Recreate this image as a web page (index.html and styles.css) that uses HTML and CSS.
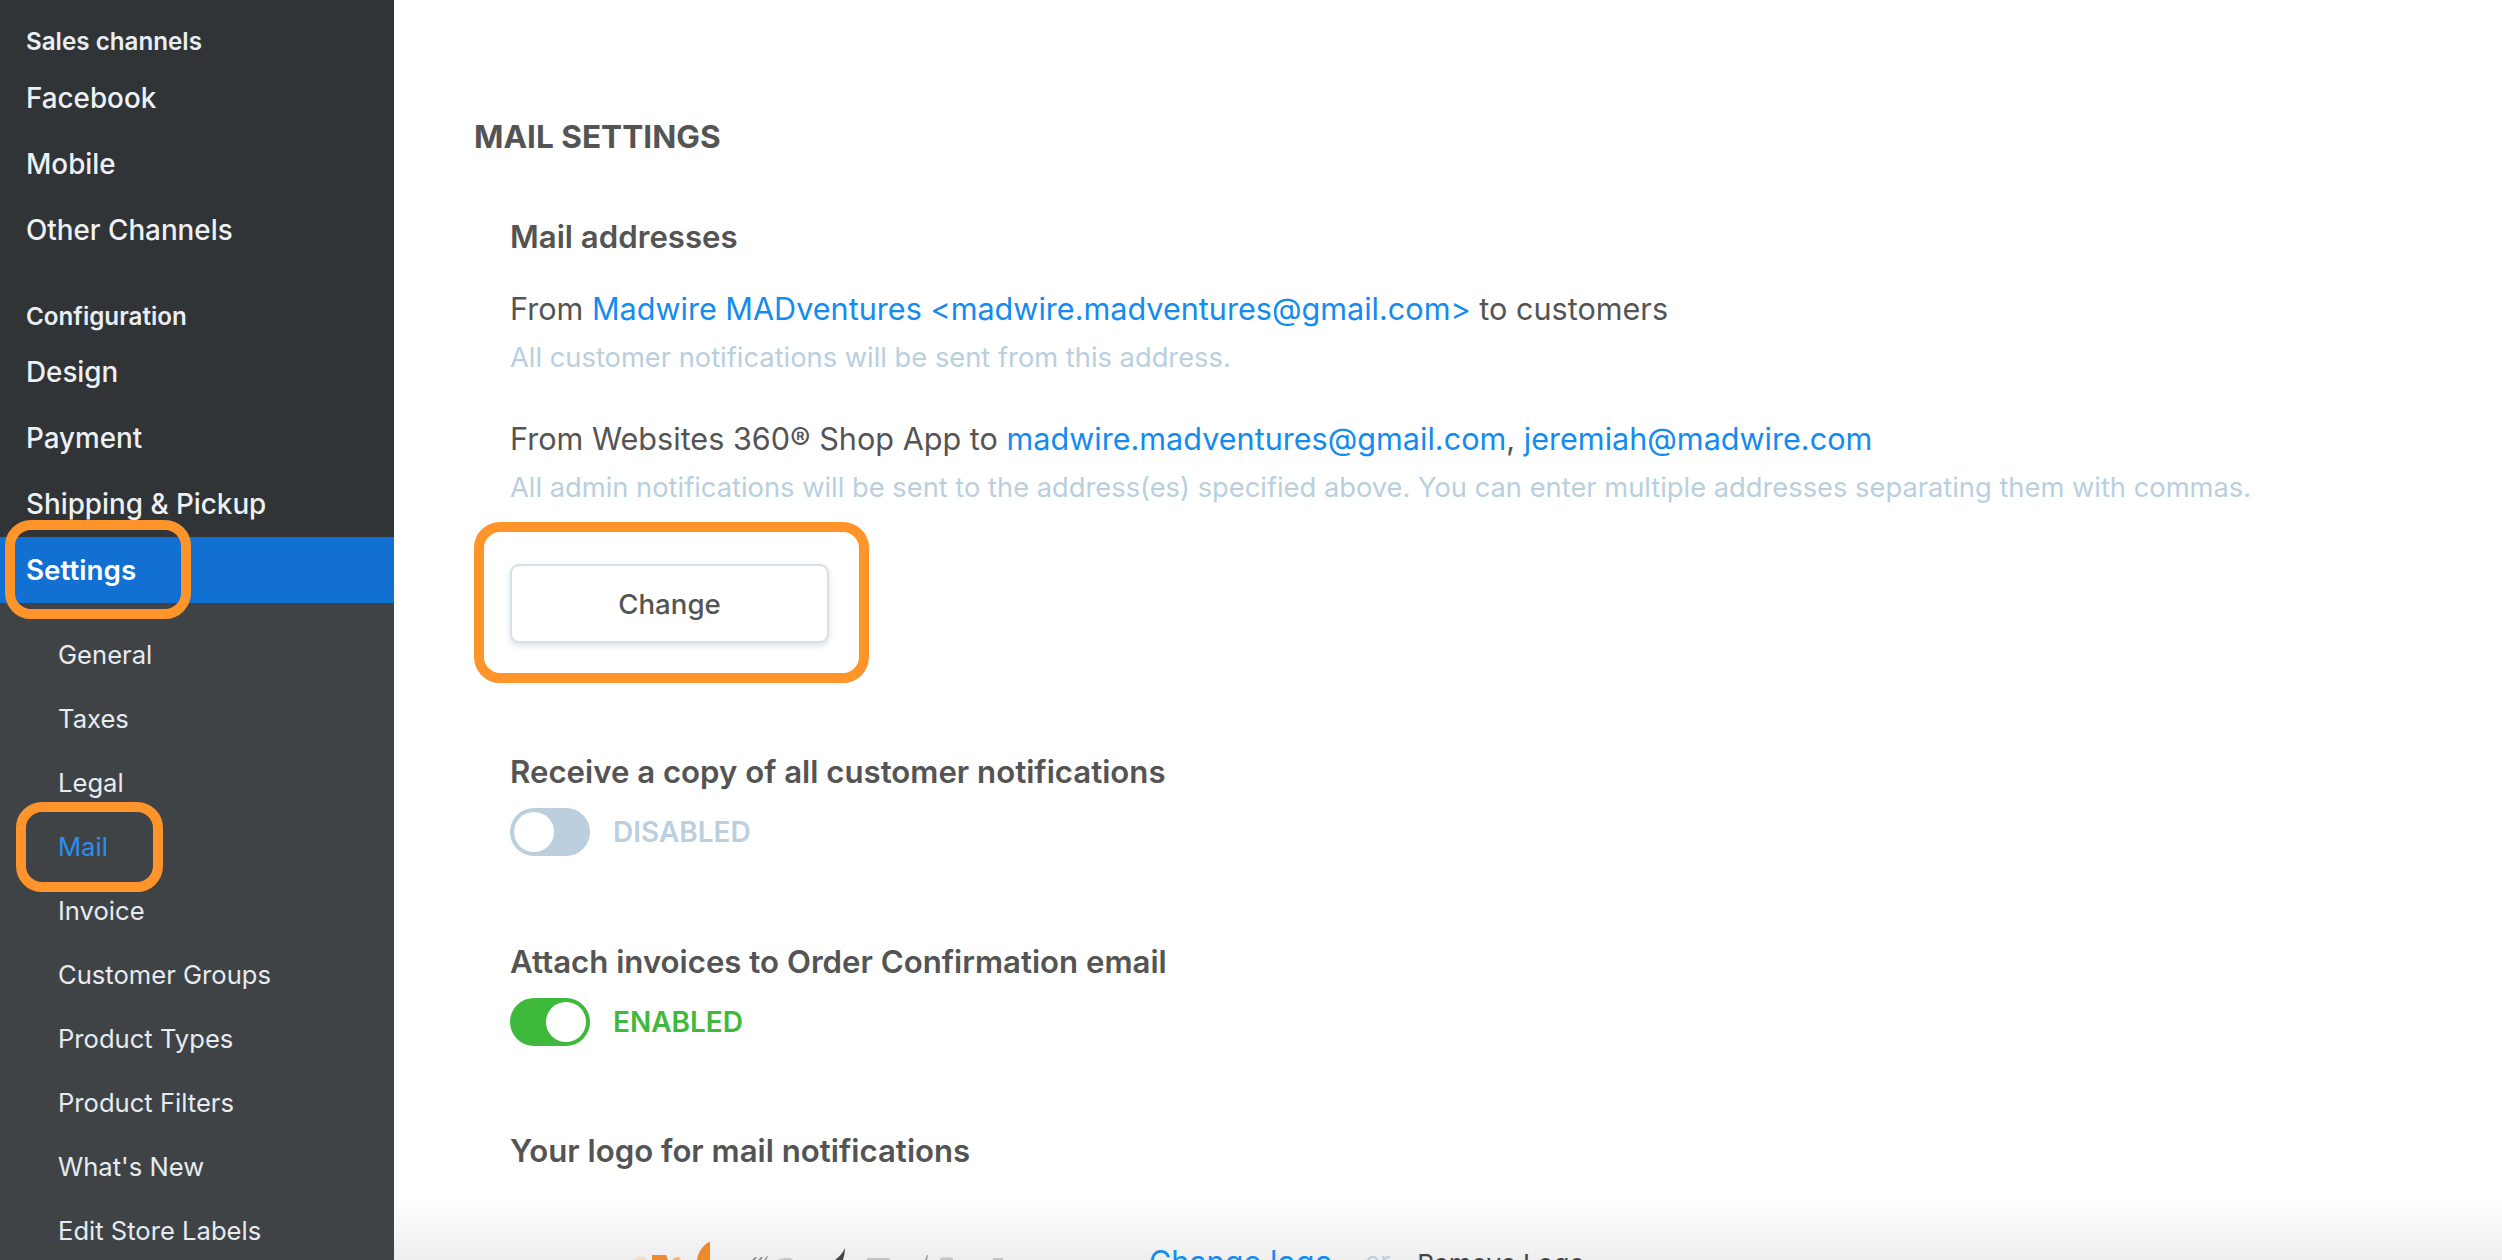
FILE: index.html
```html
<!DOCTYPE html>
<html lang="en">
<head>
<meta charset="utf-8">
<title>Mail settings</title>
<link rel="stylesheet" href="styles.css">
</head>
<body>
<div class="app">
  <nav class="sidebar">
    <div class="nav-dark">
      <div class="nav-label nav-label-first">Sales channels</div>
      <a class="nav-item">Facebook</a>
      <a class="nav-item">Mobile</a>
      <a class="nav-item">Other Channels</a>
      <div class="nav-label nav-label-next">Configuration</div>
      <a class="nav-item">Design</a>
      <a class="nav-item">Payment</a>
      <a class="nav-item">Shipping &amp; Pickup</a>
      <a class="nav-item nav-item-active">Settings</a>
    </div>
    <div class="nav-sub">
      <a class="sub-item">General</a>
      <a class="sub-item">Taxes</a>
      <a class="sub-item">Legal</a>
      <a class="sub-item sub-item-active">Mail</a>
      <a class="sub-item">Invoice</a>
      <a class="sub-item">Customer Groups</a>
      <a class="sub-item">Product Types</a>
      <a class="sub-item">Product Filters</a>
      <a class="sub-item">What's New</a>
      <a class="sub-item">Edit Store Labels</a>
    </div>
  </nav>
  <main class="content">
    <h1 class="page-title">MAIL SETTINGS</h1>
    <section class="panel">
      <h2 class="heading">Mail addresses</h2>
      <p class="line line-first">From <a class="link">Madwire MADventures &lt;madwire.madventures@gmail.com&gt;</a> to customers</p>
      <p class="hint">All customer notifications will be sent from this address.</p>
      <p class="line line-second">From Websites 360® Shop App to <a class="link">madwire.madventures@gmail.com</a>, <a class="link">jeremiah@madwire.com</a></p>
      <p class="hint">All admin notifications will be sent to the address(es) specified above. You can enter multiple addresses separating them with commas.</p>
      <button class="btn">Change</button>

      <h2 class="heading heading-copy">Receive a copy of all customer notifications</h2>
      <div class="toggle-row">
        <span class="toggle toggle-off"><span class="knob"></span></span>
        <span class="state state-off">DISABLED</span>
      </div>

      <h2 class="heading heading-attach">Attach invoices to Order Confirmation email</h2>
      <div class="toggle-row">
        <span class="toggle toggle-on"><span class="knob"></span></span>
        <span class="state state-on">ENABLED</span>
      </div>

      <h2 class="heading heading-logo">Your logo for mail notifications</h2>
    </section>
    <div class="logo-band">
      <svg class="logo" width="420" height="40" viewBox="620 1220 420 40" aria-hidden="true">
        <path d="M633 1260c3-3 8-4 12-3l1 3z" fill="#f6dcc2"/>
        <path d="M652 1255h14l2 5h-16z" fill="#ee8a2c"/>
        <path d="M672 1260c1-2 4-3 7-3l2 3z" fill="#f3b47a"/>
        <path d="M697 1260c1-8 6-15 12-18l1 0v18z" fill="#ee8a2c"/>
        <path d="M752 1260l3-3 2 0-2 3zM758 1260l3-3 2 0-2 3zM764 1260l3-4 1 0-2 4z" fill="#8f8f8f"/>
        <path d="M778 1260c2-2 8-2 12-2l3 2z" fill="#c8c8c8"/>
        <path d="M835 1260c4-3 8-7 10-12c0 4-1 8-2 12z" fill="#444"/>
        <path d="M867 1258h23v2h-23zM940 1258c4-1 9-1 13 0v2h-13zM993 1258h10v2h-10z" fill="#c4c4c4"/>
        <path d="M925 1260l2-5 1 0-1 5z" fill="#9a9a9a"/>
      </svg>
      <a class="link logo-change">Change logo</a>
      <span class="logo-or">or</span>
      <a class="logo-remove">Remove Logo</a>
    </div>
  </main>
</div>
<div class="mark mark-settings"></div>
<div class="mark mark-mail"></div>
<div class="mark mark-change"></div>
</body>
</html>
```
FILE: styles.css
```css
* { box-sizing: border-box; }
html, body { margin: 0; height: 100%; overflow: hidden; background: #fff; }
body { font-family: Inter, "Liberation Sans", sans-serif; color: #545454; }
p, h1, h2 { margin: 0; }

.app { display: flex; height: 1260px; }

.sidebar { width: 394px; flex: none; background: #404346; display: flex; flex-direction: column; overflow: hidden; }
.nav-dark { background: #303437; }
.nav-label { height: 30px; padding-left: 26px; font-size: 24.2px; line-height: 30px; font-weight: 600; color: #e9eef2; }
.nav-label-first { margin-top: 27px; }
.nav-label-next { margin-top: 39px; }
.nav-item { display: block; height: 66px; padding-left: 26px; font-size: 27.8px; line-height: 66px; font-weight: 500; color: #edf1f4; }
.nav-label + .nav-item { margin-top: 8px; }
.nav-label-next + .nav-item { margin-top: 7px; }
.nav-item-active { background: #1170d2; color: #fff; font-weight: 600; }
.nav-sub { padding-top: 20px; }
.sub-item { display: block; height: 64px; padding-left: 58px; font-size: 25.6px; line-height: 64px; color: #e6ebef; }
.sub-item-active { color: #2a8ff0; }

.content { flex: 1; min-width: 0; display: flex; flex-direction: column; }
.page-title { margin: 115px 0 0 80px; font-size: 31.6px; line-height: 44px; font-weight: 700; }
.panel { padding-left: 116px; flex: 1; }
.heading { font-size: 31.2px; line-height: 44px; font-weight: 600; }
.panel > .heading:first-child { margin-top: 56px; }
.line { font-size: 30.6px; line-height: 44px; margin-top: 28px; color: #545454; }
.line-second { margin-top: 39px; }
.link { color: #148bee; }
.hint { font-size: 27.3px; line-height: 40px; margin-top: 7px; color: #b9cfde; }
.btn { display: block; width: 319px; height: 79px; margin-top: 56px; background: #fff; border: 2px solid #d5e0e8; border-radius: 9px; box-shadow: 0 3px 6px rgba(90, 120, 150, .22); font: 500 27.6px Inter, "Liberation Sans", sans-serif; color: #545454; }
.heading-copy { margin-top: 107px; }
.toggle-row { display: flex; align-items: center; gap: 23px; margin-top: 14px; height: 48px; }
.toggle { width: 80px; height: 48px; border-radius: 24px; padding: 4px; display: flex; }
.toggle-off { background: #bbcfde; justify-content: flex-start; }
.toggle-on { background: #3fb93c; justify-content: flex-end; }
.knob { width: 40px; height: 40px; border-radius: 50%; background: #fff; }
.state { font-size: 28px; font-weight: 600; }
.state-off { color: #bbcfde; }
.state-on { color: #3fb93c; }
.heading-attach { margin-top: 84px; }
.heading-logo { margin-top: 83px; }

.logo-band { flex: none; height: 65px; display: flex; align-items: baseline; padding-left: 226px; background: linear-gradient(#fff, #eeeeee); overflow: hidden; }
.logo { flex: none; display: block; align-self: flex-start; margin-top: 25px; }
.logo-change { flex: none; margin: 45px 0 0 109px; font-size: 30.6px; line-height: 44px; }
.logo-or { flex: none; align-self: flex-start; margin: 51px 0 0 32px; font-size: 26px; color: #b9cfde; }
.logo-remove { flex: none; margin-left: 27px; font-size: 26px; color: #444; }

.mark { position: absolute; border: 10px solid #ff942a; border-radius: 26px; pointer-events: none; }
.mark-settings { left: 5px; top: 520px; width: 186px; height: 99px; }
.mark-mail { left: 16px; top: 802px; width: 147px; height: 90px; }
.mark-change { left: 474px; top: 522px; width: 395px; height: 161px; }
```
